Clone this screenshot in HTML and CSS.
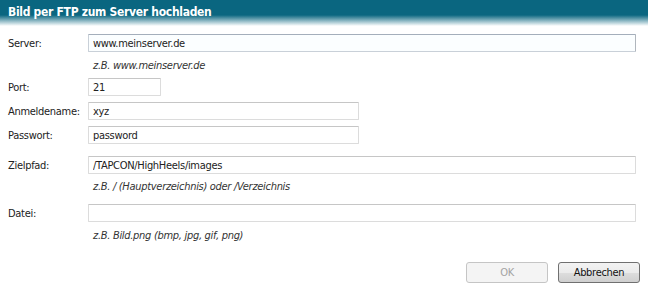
FILE: index.html
```html
<!DOCTYPE html>
<html lang="de">
<head>
  <meta charset="UTF-8" />
  <title>Bild per FTP zum Server hochladen</title>
  <link rel="stylesheet" href="styles.css">
</head>
<body>
  <div class="title">Bild per FTP zum Server hochladen</div>

  <form class="ftp-form">
    <div class="row row-server">
      <label for="server">Server:</label>
      <input type="text" id="server" class="field focused" value="www.meinserver.de">
    </div>
    <div class="hint hint-server">z.B. www.meinserver.de</div>

    <div class="row row-port">
      <label for="port">Port:</label>
      <input type="text" id="port" class="field short" value="21">
    </div>

    <div class="row row-user">
      <label for="user">Anmeldename:</label>
      <input type="text" id="user" class="field medium" value="xyz">
    </div>

    <div class="row row-pass">
      <label for="pass">Passwort:</label>
      <input type="text" id="pass" class="field medium" value="password">
    </div>

    <div class="row row-path">
      <label for="path">Zielpfad:</label>
      <input type="text" id="path" class="field" value="/TAPCON/HighHeels/images">
    </div>
    <div class="hint hint-path">z.B. / (Hauptverzeichnis) oder /Verzeichnis</div>

    <div class="row row-file">
      <label for="file">Datei:</label>
      <input type="text" id="file" class="field" value="">
    </div>
    <div class="hint hint-file">z.B. Bild.png (bmp, jpg, gif, png)</div>

    <div class="buttons">
      <button type="button" class="btn" disabled>OK</button>
      <button type="button" class="btn">Abbrechen</button>
    </div>
  </form>
</body>
</html>
```

FILE: styles.css
```css
body {
  margin: 0;
  padding: 0;
  background: #fff;
  font-family: "DejaVu Sans Condensed", "Liberation Sans", sans-serif;
  font-size: 11px;
  letter-spacing: -0.3px;
  color: #222;
}

.title {
  height: 26px;
  padding-left: 8px;
  line-height: 25px;
  font-size: 12px;
  font-weight: bold;
  color: #fff;
  background: linear-gradient(to bottom, #0a6680 0, #0a6680 15px, #fff 26px);
}

.ftp-form {
  margin: 0;
  padding: 8px 12px 0 8px;
}

.row {
  display: grid;
  grid-template-columns: 80px 1fr;
  align-items: center;
  height: 18px;
}

label {
  display: block;
}

.field {
  box-sizing: border-box;
  height: 18px;
  padding: 0 4px;
  margin: 0;
  border: 1px solid #dcdcdc;
  border-top-color: #c6c6c6;
  border-radius: 1px;
  background: #fff;
  font: inherit;
  letter-spacing: inherit;
  color: #222;
  width: 100%;
}

.field.focused {
  border-color: #c9d0d8;
  border-top-color: #a4aebb;
  border-right-color: #b0b6bd;
  background: #fbfeff;
}

.field.short {
  width: 73px;
}

.field.medium {
  width: 271px;
}

.hint {
  margin-left: 85px;
  font-style: italic;
  color: #333;
  line-height: 14px;
}

.hint-server { margin-top: 7px; }
.row-port { margin-top: 5px; }
.row-user { margin-top: 6px; }
.row-pass { margin-top: 6px; }
.row-path { margin-top: 12px; }
.hint-path { margin-top: 6px; }
.row-file { margin-top: 10px; }
.hint-file { margin-top: 7px; }

.buttons {
  display: flex;
  justify-content: flex-end;
  gap: 10px;
  margin-top: 19px;
  margin-right: -4px;
}

.btn {
  width: 82px;
  height: 21px;
  padding: 0;
  border: 1px solid #707070;
  border-radius: 3px;
  background: linear-gradient(to bottom, #f3f3f3 0, #ebebeb 50%, #dddddd 51%, #cfcfcf 100%);
  font: inherit;
  letter-spacing: inherit;
  color: #111;
}

.btn:disabled {
  border-color: #c5c5c5;
  background: #f4f4f4;
  color: #a3a3a3;
}
```
